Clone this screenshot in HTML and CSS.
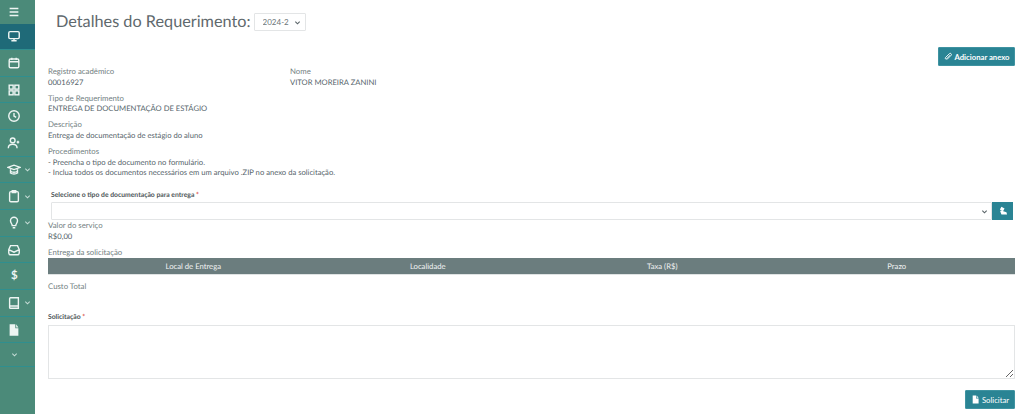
FILE: index.html
```html
<!DOCTYPE html>
<html lang="pt-BR">
  <head>
    <meta charset="utf-8"/>
    <title>Detalhes do Requerimento</title>
    <link rel="stylesheet" href="styles.css">
  </head>
  <body>
    <nav class="side">
      <div class="side__item side__item--top">
        <svg viewBox="0 0 16 16"><path d="M3 4h10M3 8h10M3 12h10"/></svg>
      </div>
      <div class="side__item side__item--active">
        <svg viewBox="0 0 16 16"><rect x="2" y="3" width="12" height="8" rx="1.5"/><path d="M8 11v2M5 13.500h6"/></svg>
      </div>
      <div class="side__item">
        <svg viewBox="0 0 16 16"><rect x="2.500" y="3.500" width="11" height="10" rx="1.500"/><path d="M2.500 6.500h11M5.500 2v2.500M10.500 2v2.500"/></svg>
      </div>
      <div class="side__item">
        <svg viewBox="0 0 16 16"><rect x="2.500" y="2.500" width="4.500" height="4.500"/><rect x="9" y="2.500" width="4.500" height="4.500"/><rect x="2.500" y="9" width="4.500" height="4.500"/><rect x="9" y="9" width="4.500" height="4.500"/></svg>
      </div>
      <div class="side__item">
        <svg viewBox="0 0 16 16"><circle cx="8" cy="8" r="6"/><path d="M8 4.500V8l2.500 1.500"/></svg>
      </div>
      <div class="side__item">
        <svg viewBox="0 0 16 16"><circle cx="6.500" cy="5" r="2.700"/><path d="M1.500 14c0-3 2-4.500 5-4.500s5 1.500 5 4.500M12.500 5.500v3M11 7h3"/></svg>
      </div>
      <div class="side__item">
        <svg viewBox="0 0 16 16"><path d="M1 5l7-2.500L15 5 8 7.500zM4 7v4.500c2 1.500 6 1.500 8 0V7M4 9.500c2 1.500 6 1.500 8 0"/></svg>
        <svg class="side__chev" viewBox="0 0 8 8"><path d="M1.500 3L4 5.500 6.500 3"/></svg>
      </div>
      <div class="side__item">
        <svg viewBox="0 0 16 16"><rect x="3" y="3" width="10" height="11.500" rx="1.500"/><path d="M6 2h4v2H6z"/></svg>
        <svg class="side__chev" viewBox="0 0 8 8"><path d="M1.500 3L4 5.500 6.500 3"/></svg>
      </div>
      <div class="side__item">
        <svg viewBox="0 0 16 16"><path d="M6 11c0-2-2-3-2-5.500a4 4 0 0 1 8 0C12 8 10 9 10 11zM6.500 13.500h3"/></svg>
        <svg class="side__chev" viewBox="0 0 8 8"><path d="M1.500 3L4 5.500 6.500 3"/></svg>
      </div>
      <div class="side__item">
        <svg viewBox="0 0 16 16"><path d="M4 3h8l2 4.500v4a2 2 0 0 1-2 2H4a2 2 0 0 1-2-2v-4zM2 7.500l6 3 6-3"/></svg>
      </div>
      <div class="side__item side__dollar">$</div>
      <div class="side__item">
        <svg viewBox="0 0 16 16"><path d="M3 11.500V3a1 1 0 0 1 1-1h9v9.500H3zM3 11.500V13a1 1 0 0 0 1 1h9v-2.500"/></svg>
        <svg class="side__chev" viewBox="0 0 8 8"><path d="M1.500 3L4 5.500 6.500 3"/></svg>
      </div>
      <div class="side__item">
        <svg class="side__solid" viewBox="0 0 16 16"><path d="M3 1.500h6.500V6H13v8.500H3zM10.500 1.500L13 5h-2.500zM5 8h6v1H5zM5 10.500h6v1H5z"/></svg>
      </div>
      <div class="side__item side__item--more">
        <svg class="side__chev" viewBox="0 0 8 8"><path d="M1.500 3L4 5.500 6.500 3"/></svg>
      </div>
    </nav>

    <main class="content">
      <header class="head">
        <h1 class="head__title">Detalhes do Requerimento:</h1>
        <div class="pick">
          <select class="pick__select"><option>2024-2</option></select>
          <svg class="pick__arrow" viewBox="0 0 8 8"><path d="M1.500 3L4 5.500 6.500 3"/></svg>
        </div>
      </header>

      <div class="actions">
        <button type="button" class="btn">
          <svg viewBox="0 0 16 16"><path d="M5 13.500L12.500 6a2 2 0 0 0-3-3L2.500 10a1.500 1.500 0 0 0 2 2.200L11 5.500"/></svg>
          Adicionar anexo
        </button>
      </div>

      <div class="info info--two">
        <div class="info__col">
          <div class="info__label">Registro acadêmico</div>
          <div class="info__value">00016927</div>
        </div>
        <div>
          <div class="info__label">Nome</div>
          <div class="info__value">VITOR MOREIRA ZANINI</div>
        </div>
      </div>
      <div class="info">
        <div class="info__label">Tipo de Requerimento</div>
        <div class="info__value">ENTREGA DE DOCUMENTAÇÃO DE ESTÁGIO</div>
      </div>
      <div class="info">
        <div class="info__label">Descrição</div>
        <div class="info__value">Entrega de documentação de estágio do aluno</div>
      </div>
      <div class="info">
        <div class="info__label">Procedimentos</div>
        <div class="info__value">- Preencha o tipo de documento no formulário.</div>
        <div class="info__value">- Inclua todos os documentos necessários em um arquivo .ZIP no anexo da solicitação.</div>
      </div>

      <div class="doc">
        <label class="field-label">Selecione o tipo de documentação para entrega <span class="req">*</span></label>
        <div class="doc__row">
          <div class="pick pick--wide">
            <select class="pick__select"><option></option></select>
            <svg class="pick__arrow" viewBox="0 0 8 8"><path d="M1.500 3L4 5.500 6.500 3"/></svg>
          </div>
          <button type="button" class="doc__clear" aria-label="Limpar">
            <svg viewBox="0 0 16 16"><path d="M5.500 1L10.500 4 8 8.500 3 5.500zM8.500 8.500l5 1.500 1 3.500H5.500l-2-5 1-1.500z"/></svg>
          </button>
        </div>
      </div>

      <div class="info info--price">
        <div class="info__label">Valor do serviço</div>
        <div class="info__value">R$0,00</div>
      </div>

      <div class="info__label">Entrega da solicitação</div>
      <div class="delivery">
        <span>Local de Entrega</span>
        <span>Localidade</span>
        <span>Taxa (R$)</span>
        <span>Prazo</span>
      </div>
      <div class="info__label total">Custo Total</div>

      <label class="field-label field-label--flush">Solicitação <span class="req">*</span></label>
      <textarea class="request"></textarea>

      <div class="submit">
        <button type="button" class="btn btn--plain">
          <svg viewBox="0 0 16 16"><path class="fill" d="M3 1h6v5h4.500v9H3zM10 1l3.500 4H10z"/></svg>
          Solicitar
        </button>
      </div>
    </main>
  </body>
</html>
```

FILE: styles.css
```css
* {
  box-sizing: border-box;
}

html, body {
  height: 414px;
  overflow: hidden;
}

body {
  display: flex;
  margin: 0;
  background: #FFF;
  color: #55636a;
  font-family: 'Lato', sans-serif;
  font-size: 7.800px;
  line-height: 10.670px;
  text-rendering: geometricPrecision;
}

.side {
  flex: none;
  width: 35px;
  height: 414px;
  background: #4b8a79;
}

.side__item {
  display: flex;
  align-items: center;
  gap: 3px;
  height: 26.670px;
  padding-left: 6.500px;
  border-bottom: 1px solid #2f8f8f;
  color: #eef5f3;
}

.side__item--top {
  height: 23.500px;
  border-bottom: 0;
}

.side__item--active {
  background: #1f6a78;
}

.side__item--more {
  height: 24px;
  padding-left: 10.500px;
}

.side__item svg {
  width: 14px;
  height: 14px;
  fill: none;
  stroke: #eef5f3;
  stroke-width: 1.600;
}

.side__item .side__chev {
  width: 7px;
  height: 7px;
  stroke: #c5dcd6;
  stroke-width: 1.200;
}

.side__item .side__solid {
  fill: #eef5f3;
  stroke: none;
}

.side__dollar {
  padding-left: 11px;
  font-size: 11.500px;
  font-weight: 700;
}

.content {
  flex: 1;
  min-width: 0;
  padding: 0 9px 0 13px;
}

.head {
  display: flex;
  align-items: center;
  gap: 3px;
  height: 47px;
  padding: 0 0 3px 8px;
}

.head__title {
  margin: 0;
  color: #5f696d;
  font-size: 16.250px;
  font-weight: 400;
  line-height: 24px;
}

.pick {
  position: relative;
  width: 52px;
  height: 18px;
}

.pick--wide {
  flex: 1;
  width: auto;
}

.pick__select {
  display: block;
  width: 100%;
  height: 100%;
  padding: 0 0 0 8px;
  background: #FFF;
  border: 1px solid #e3e5e6;
  border-radius: 1px;
  color: #6b7578;
  font-family: inherit;
  font-size: 8px;
  appearance: none;
}

.pick__arrow {
  position: absolute;
  top: 5.500px;
  right: 4.500px;
  width: 7px;
  height: 7px;
  fill: none;
  stroke: #5a6468;
  stroke-width: 1.300;
}

.actions {
  display: flex;
  justify-content: flex-end;
  height: 19px;
}

.btn {
  display: inline-flex;
  align-items: center;
  justify-content: center;
  gap: 2px;
  width: 77px;
  height: 19px;
  padding: 0;
  background: #2a8494;
  border: 1px solid #3f93a1;
  border-radius: 1px;
  color: #FFF;
  font-family: inherit;
  font-size: 7.700px;
  font-weight: 700;
}

.btn svg {
  width: 9px;
  height: 9px;
  fill: none;
  stroke: #FFF;
  stroke-width: 1.600;
}

.btn .fill {
  fill: #FFF;
  stroke: none;
}

.btn--plain {
  width: 50px;
  font-weight: 400;
}

.info {
  margin-bottom: 5.330px;
}

.info--two {
  display: flex;
}

.info__col {
  width: 242px;
}

.info__label {
  color: #727e81;
}

.info__value {
  font-size: 7.650px;
}

.info--price {
  margin-bottom: 6px;
}

.doc {
  margin: 12px 2px 0 3px;
}

.field-label {
  display: block;
  height: 12px;
  color: #4d5558;
  font-size: 6.800px;
  font-weight: 700;
}

.field-label--flush {
  height: 13.300px;
  margin-top: 20.300px;
}

.req {
  color: #d9534f;
}

.doc__row {
  display: flex;
  height: 18px;
}

.doc__clear {
  display: flex;
  align-items: center;
  justify-content: center;
  width: 21px;
  padding: 0;
  background: #2a8494;
  border: 0;
}

.doc__clear svg {
  width: 10px;
  height: 10px;
  fill: #FFF;
}

.delivery {
  display: grid;
  grid-template-columns: repeat(4, 234.500px);
  align-items: center;
  height: 17px;
  padding-left: 28px;
  background: #6b7d7e;
  border-bottom: 1px solid #dfe3e3;
  color: #f2f4f4;
  font-size: 7.700px;
  text-align: center;
}

.total {
  margin-top: 5.700px;
}

.request {
  display: block;
  width: 100%;
  height: 54px;
  background: #FFF;
  border: 1px solid #e3e5e6;
  border-radius: 0;
}

.submit {
  display: flex;
  justify-content: flex-end;
  margin-top: 11px;
}
```
